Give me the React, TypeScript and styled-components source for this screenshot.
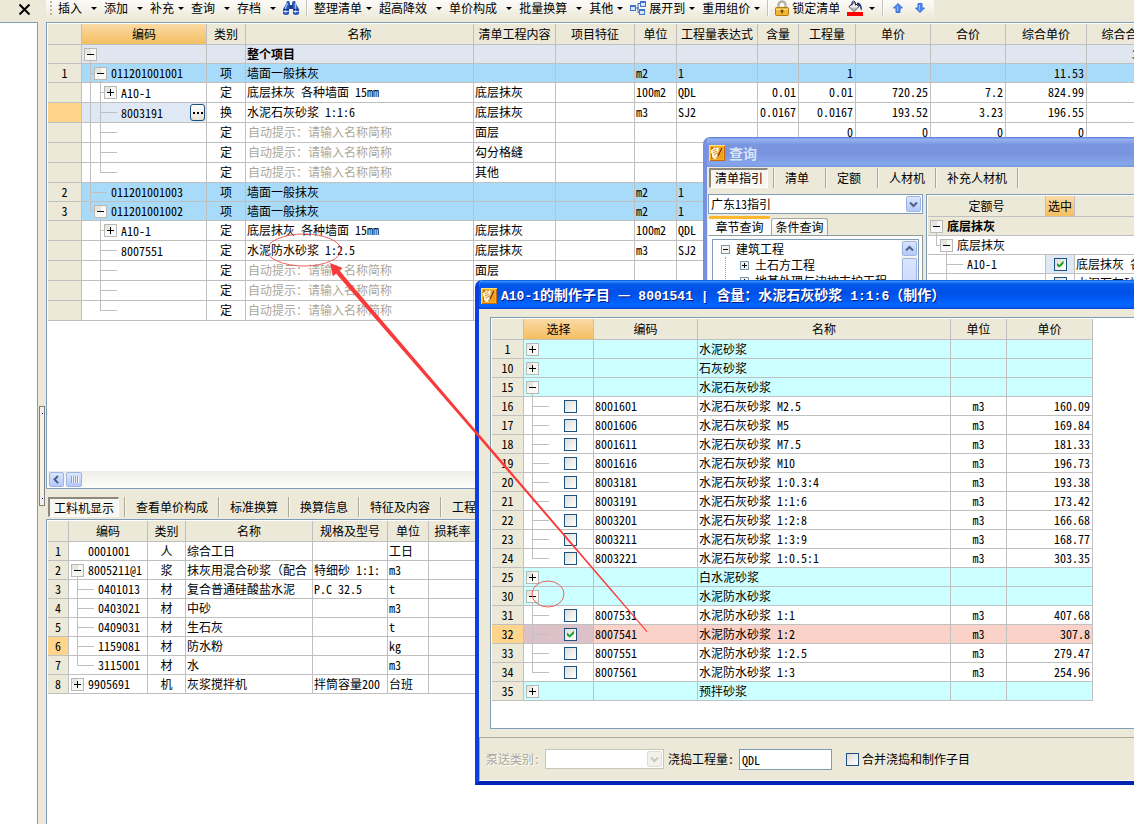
import React from 'react';
import styled, { createGlobalStyle, css } from 'styled-components';

const line = '#c0c0c0';
const beige = '#ece9d8';
const frame = '#7f9db9';

const Global = createGlobalStyle`
  * { box-sizing: border-box; }
  body { margin: 0; background: #fff; }
  body, button, input, select {
    font-family: "Noto Sans Mono CJK SC", "Noto Sans CJK SC", "Liberation Sans", sans-serif;
    font-size: 12px;
    line-height: 16px;
    color: #000;
  }
`;

const Page = styled.div`
  position: relative;
  display: flex;
  height: 100vh;
  overflow: hidden;
  background: ${beige};
`;

const SidePanel = styled.aside`
  flex: 0 0 38px;
  display: flex;
  flex-direction: column;
`;

const SideHead = styled.div`
  height: 22px;
  display: flex;
  align-items: center;
  justify-content: flex-end;
  padding: 0 8px 4px 0;
`;

const PlainButton = styled.button`
  display: flex;
  align-items: center;
  border: 0;
  padding: 0;
  background: none;
  white-space: nowrap;
`;

const SideBody = styled.div`
  flex: 1;
  background: #fff;
  border-top: 1px solid ${frame};
  border-right: 1px solid ${frame};
`;

const Splitter = styled.div`
  flex: 0 0 8px;
  padding: 406px 1px 0;
`;

const SplitHandle = styled.div`
  height: 100px;
  width: 6px;
  display: flex;
  flex-direction: column;
  justify-content: space-between;
  align-items: center;
  padding: 6px 0;
  border: 1px solid #808080;
  background: #f4f2e8;
`;

const Dot = styled.i`
  width: 1px;
  height: 1px;
  background: #0000a0;
`;

const Work = styled.main`
  flex: 1;
  min-width: 0;
  display: flex;
  flex-direction: column;
`;

const Toolbar = styled.div`
  height: 22px;
  display: flex;
  background: ${beige};
`;

const ToolGroup = styled.div`
  height: 20px;
  display: flex;
  align-items: center;
  padding: 0 0 4px 4px;
  background: linear-gradient(#fcfbf8, #ece9d8);
`;

const Grip = styled.span`
  width: 2px;
  height: 15px;
  margin-right: 6px;
  background: repeating-linear-gradient(#b8b4a4 0 2px, transparent 2px 4px);
`;

const ToolButton = styled(PlainButton)<{ $wide?: boolean }>`
  gap: ${p => (p.$wide ? 9 : 4)}px;
  padding-right: 7px;
`;

const ToolIcon = styled(PlainButton)`
  gap: 3px;
  padding-right: 7px;
`;

const MoveButton = styled(PlainButton)`
  width: 22px;
  padding-left: 3px;
`;

const Caret = styled.i`
  border: 3px solid transparent;
  border-width: 3px 3px 0;
  border-top-color: #000;
`;

const ToolSep = styled.span`
  width: 2px;
  height: 16px;
  margin-right: 6px;
  border-left: 1px solid #c5c2b8;
  border-right: 1px solid #fff;
`;

const GridPanel = styled.section<{ $fill?: boolean }>`
  flex: ${p => (p.$fill ? '1 1 0' : '0 0 305px')};
  min-height: 0;
  display: flex;
  flex-direction: column;
  justify-content: space-between;
  overflow: hidden;
  background: #fff;
  border: 1px solid ${frame};
  border-right: 0;
  border-bottom-width: ${p => (p.$fill ? 1 : 0)}px;
  padding: 1px 0 0 1px;
`;

const Table = styled.table`
  table-layout: fixed;
  width: 0;
  border-collapse: separate;
  border-spacing: 0;
`;

const cell = css`
  padding: 0 2px;
  border-right: 1px solid ${line};
  border-bottom: 1px solid ${line};
  font-weight: normal;
  white-space: nowrap;
  overflow: hidden;
`;

const Head = styled.th<{ $hot?: boolean }>`
  ${cell}
  height: 21px;
  text-align: center;
  background: ${p => (p.$hot ? 'linear-gradient(#fbdaa6, #f3bf60)' : beige)};
`;

const RowNo = styled.th<{ $hot?: boolean }>`
  ${cell}
  text-align: center;
  background: ${p => (p.$hot ? '#ffd48b' : beige)};
`;

type Align = 'left' | 'center' | 'right';

const Cell = styled.td<{ $align?: Align; $hint?: boolean; $bg?: string; $bold?: boolean }>`
  ${cell}
  text-align: ${p => p.$align || 'left'};
  padding-left: ${p => (p.$hint ? 2 : 1)}px;
  padding-right: ${p => (p.$align === 'right' ? 2 : 1)}px;
  color: ${p => (p.$hint ? '#aca899' : '#000')};
  font-weight: ${p => (p.$bold ? 700 : 400)};
  background: ${p => p.$bg || 'transparent'};
`;

const TreeTd = styled.td<{ $bg?: string }>`
  ${cell}
  padding: 0 1px 0 0;
  background: ${p => p.$bg || 'transparent'};
`;

const TreeRow = styled.div`
  display: flex;
  align-items: center;
`;

const TreeText = styled.span`
  flex: 1;
`;

const Row = styled.tr<{ $h?: number; $bg?: string }>`
  height: ${p => p.$h || 19}px;
  background: ${p => p.$bg || '#fff'};
  ${Cell} {
    padding-bottom: ${p => (p.$h === 20 ? 2 : 0)}px;
  }
`;

const MoreButton = styled.button`
  width: 15px;
  height: 17px;
  display: flex;
  align-items: center;
  justify-content: center;
  gap: 2px;
  padding: 0;
  border: 1px solid #1c4f7c;
  border-radius: 3px;
  background: linear-gradient(#fff, #e6e3d6);
`;

const MoreDot = styled.i`
  width: 2px;
  height: 2px;
  background: #000;
`;

const Check = styled.input.attrs({ type: 'checkbox' })`
  appearance: none;
  flex: none;
  display: block;
  width: 13px;
  height: 13px;
  margin: 0;
  border: 1px solid #1c5180;
  background: linear-gradient(135deg, #dcdcd7, #fff);
  &:checked::after {
    content: '';
    display: block;
    width: 7px;
    height: 7px;
    margin: 2px;
    background: #21a121;
    clip-path: polygon(0 29%, 40% 66%, 100% 0, 100% 45%, 40% 100%, 0 70%);
  }
`;

const SelectBox = styled.div`
  display: flex;
  padding-left: 11px;
`;

const CenterBox = styled.div`
  display: flex;
  justify-content: center;
`;

/* Tree guides drawn in front of a node: depth decides the indent. */
type NodeInfo = { d: number; box?: '+' | '-'; last?: boolean; through?: number[] };

const tx = (d: number) => 8 + 10 * d;

const GuideSvg = styled.svg`
  display: block;
  flex: none;
`;

function Guides({ node, h = 18 }: { node: NodeInfo; h?: number }) {
  const { d, box, last, through = [] } = node;
  const x = tx(d);
  const px = tx(d - 1);
  const mid = Math.floor(h / 2);
  return (
    <GuideSvg width={x + 11} height={h} shapeRendering="crispEdges" aria-hidden="true">
      {through.map(t => (
        <rect key={t} x={tx(t)} y={0} width={1} height={h} fill={line} />
      ))}
      {d > 0 && <rect x={px} y={0} width={1} height={last ? mid + 1 : h} fill={line} />}
      {d > 0 && <rect x={px} y={mid} width={box ? 5 : 17} height={1} fill={line} />}
      {box === '-' && <rect x={x} y={mid} width={1} height={h - mid} fill={line} />}
      {box && (
        <g>
          <rect x={x - 6} y={mid - 6} width={13} height={13} fill="#b8b8b4" />
          <rect x={x - 5} y={mid - 5} width={11} height={11} fill="#f8f8f6" />
          <rect x={x - 5} y={mid - 5} width={6} height={5} fill="#e6e6e1" />
          <rect x={x - 3} y={mid} width={7} height={1} fill="#000" />
          {box === '+' && <rect x={x} y={mid - 3} width={1} height={7} fill="#000" />}
        </g>
      )}
    </GuideSvg>
  );
}

function Cols({ widths }: { widths: number[] }) {
  return (
    <colgroup>
      {widths.map((w, i) => (
        <col key={i} style={{ width: w }} />
      ))}
    </colgroup>
  );
}

/* ---------- Main bill grid ---------- */

const mainHeads = ['', '编码', '类别', '名称', '清单工程内容', '项目特征', '单位', '工程量表达式', '含量', '工程量', '单价', '合价', '综合单价', '综合合价'];
const mainWidths = [34, 125, 39, 228, 82, 79, 42, 81, 41, 57, 75, 75, 81, 78];

type MainRow = {
  no?: string;
  node: NodeInfo;
  code?: string;
  kind?: string;
  name?: string;
  work?: string;
  unit?: string;
  expr?: string;
  nums?: string[];
  tone?: 'root' | 'bill' | 'current';
};

const hint = '自动提示：请输入名称简称';
const zeros = ['', '0', '0', '0', '0', ''];

const mainRows: MainRow[] = [
  { node: { d: 0, box: '-' }, name: '整个项目', nums: ['', '', '', '', '', '34.59'], tone: 'root' },
  { no: '1', node: { d: 1, box: '-' }, code: '011201001001', kind: '项', name: '墙面一般抹灰', unit: 'm2', expr: '1', nums: ['', '1', '', '', '11.53', ''], tone: 'bill' },
  { node: { d: 2, box: '+', through: [0] }, code: 'A10-1', kind: '定', name: '底层抹灰 各种墙面 15mm', work: '底层抹灰', unit: '100m2', expr: 'QDL', nums: ['0.01', '0.01', '720.25', '7.2', '824.99', ''] },
  { node: { d: 2, through: [0] }, code: '8003191', kind: '换', name: '水泥石灰砂浆 1:1:6', work: '底层抹灰', unit: 'm3', expr: 'SJ2', nums: ['0.0167', '0.0167', '193.52', '3.23', '196.55', ''], tone: 'current' },
  { node: { d: 2, through: [0] }, kind: '定', work: '面层', nums: zeros },
  { node: { d: 2, through: [0] }, kind: '定', work: '勾分格缝' },
  { node: { d: 2, last: true, through: [0] }, kind: '定', work: '其他' },
  { no: '2', node: { d: 1 }, code: '011201001003', kind: '项', name: '墙面一般抹灰', unit: 'm2', expr: '1', tone: 'bill' },
  { no: '3', node: { d: 1, box: '-', last: true }, code: '011201001002', kind: '项', name: '墙面一般抹灰', unit: 'm2', expr: '1', tone: 'bill' },
  { node: { d: 2, box: '+' }, code: 'A10-1', kind: '定', name: '底层抹灰 各种墙面 15mm', work: '底层抹灰', unit: '100m2', expr: 'QDL' },
  { node: { d: 2 }, code: '8007551', kind: '定', name: '水泥防水砂浆 1:2.5', work: '底层抹灰', unit: 'm3', expr: 'SJ2' },
  { node: { d: 2 }, kind: '定', work: '面层' },
  { node: { d: 2 }, kind: '定' },
  { node: { d: 2, last: true }, kind: '定' },
];

function MainGrid() {
  return (
    <Table>
      <Cols widths={mainWidths} />
      <thead>
        <tr>
          {mainHeads.map((h, i) => (
            <Head key={i} $hot={i === 1}>{h}</Head>
          ))}
        </tr>
      </thead>
      <tbody>
        {mainRows.map((r, i) => {
          const flat = r.tone === 'root' || r.tone === 'bill';
          const h = flat ? 19 : 20;
          const bg = r.tone === 'root' ? '#dfe6f0' : r.tone === 'bill' ? '#a8dbfa' : '#fff';
          const nums = r.nums || ['', '', '', '', '', ''];
          return (
            <Row key={i} $h={h} $bg={bg}>
              <RowNo $hot={r.tone === 'current'}>{r.no}</RowNo>
              <TreeTd $bg={r.tone === 'current' ? '#dfe9f5' : undefined}>
                <TreeRow>
                  <Guides node={r.node} h={h - 1} />
                  <TreeText>{r.code}</TreeText>
                  {r.tone === 'current' && (
                    <MoreButton aria-label="选择编码">
                      <MoreDot /><MoreDot /><MoreDot />
                    </MoreButton>
                  )}
                </TreeRow>
              </TreeTd>
              <Cell $align="center">{r.kind}</Cell>
              <Cell $hint={!r.name} $bold={r.tone === 'root'}>{r.name || hint}</Cell>
              <Cell>{r.work}</Cell>
              <Cell />
              <Cell>{r.unit}</Cell>
              <Cell>{r.expr}</Cell>
              {nums.map((n, k) => (
                <Cell key={k} $align="right">{n}</Cell>
              ))}
            </Row>
          );
        })}
      </tbody>
    </Table>
  );
}

/* ---------- Resource grid ---------- */

const resHeads = ['', '编码', '类别', '名称', '规格及型号', '单位', '损耗率', ''];
const resWidths = [21, 79, 38, 127, 75, 41, 48, 80];

type ResRow = [string, NodeInfo, string, string, string, string, string];

const resRows: ResRow[] = [
  ['1', { d: 0 }, '0001001', '人', '综合工日', '', '工日'],
  ['2', { d: 0, box: '-' }, '8005211@1', '浆', '抹灰用混合砂浆（配合', '特细砂 1:1:', 'm3'],
  ['3', { d: 1 }, '0401013', '材', '复合普通硅酸盐水泥', 'P.C 32.5', 't'],
  ['4', { d: 1 }, '0403021', '材', '中砂', '', 'm3'],
  ['5', { d: 1 }, '0409031', '材', '生石灰', '', 't'],
  ['6', { d: 1 }, '1159081', '材', '防水粉', '', 'kg'],
  ['7', { d: 1, last: true }, '3115001', '材', '水', '', 'm3'],
  ['8', { d: 0, box: '+' }, '9905691', '机', '灰浆搅拌机', '拌筒容量200', '台班'],
];

function ResourceGrid() {
  return (
    <Table>
      <Cols widths={resWidths} />
      <thead>
        <tr>{resHeads.map((h, i) => <Head key={i}>{h}</Head>)}</tr>
      </thead>
      <tbody>
        {resRows.map(([no, node, code, kind, name, spec, unit]) => (
          <Row key={no}>
            <RowNo $hot={no === '6'}>{no}</RowNo>
            <TreeTd>
              <TreeRow><Guides node={node} /><TreeText>{code}</TreeText></TreeRow>
            </TreeTd>
            <Cell $align="center">{kind}</Cell>
            <Cell>{name}</Cell>
            <Cell>{spec}</Cell>
            <Cell>{unit}</Cell>
            <Cell />
            <Cell />
          </Row>
        ))}
      </tbody>
    </Table>
  );
}

/* ---------- Scroll bar, tabs ---------- */

const HScroll = styled.div`
  flex: 0 0 17px;
  display: flex;
  align-items: center;
  gap: 2px;
  padding-left: 1px;
  background: linear-gradient(#eeede5, #fefefb);
`;

const scrollFace = css`
  display: flex;
  align-items: center;
  justify-content: center;
  padding: 0;
  border: 1px solid #9db5e4;
  border-radius: 2px;
  background: linear-gradient(#dbe6fe, #b3c9fa);
`;

const ScrollButton = styled.button`
  ${scrollFace}
  flex: none;
  width: 15px;
  height: 15px;
`;

const Thumb = styled.span`
  ${scrollFace}
  width: 16px;
  height: 15px;
  gap: 1px;
`;

const Ridge = styled.i`
  width: 1px;
  height: 7px;
  background: #7f9fe8;
  box-shadow: 1px 0 #eef4fe;
`;

const TabStrip = styled.div<{ $low?: boolean }>`
  flex: none;
  display: flex;
  align-items: center;
  height: ${p => (p.$low ? 30 : 21)}px;
  padding: ${p => (p.$low ? '6px 0 0 2px' : '0 0 0 2px')};
  overflow: hidden;
`;

const Tab = styled.button<{ $on?: boolean }>`
  flex: none;
  height: 21px;
  min-width: 50px;
  padding: 0 10px;
  text-align: left;
  white-space: nowrap;
  border: 0;
  background: none;
  ${p =>
    p.$on &&
    css`
      height: 20px;
      padding: 0 4px;
      margin-right: 5px;
      border: 1px solid #fff;
      border-top: 2px solid #8c897c;
      border-left: 2px solid #8c897c;
      background: #f8f6f0;
    `}
`;

const TabRule = styled.i`
  flex: none;
  width: 2px;
  height: 20px;
  border-left: 1px solid #aca899;
  border-right: 1px solid #f8f7f2;
`;

function Tabs({ items, low }: { items: string[]; low?: boolean }) {
  return (
    <TabStrip $low={low} role="tablist">
      {items.map((t, i) => (
        <React.Fragment key={t}>
          <Tab $on={i === 0} role="tab" aria-selected={i === 0}>{t}</Tab>
          <TabRule />
        </React.Fragment>
      ))}
    </TabStrip>
  );
}

/* ---------- Icons ---------- */

const AppIcon = () => (
  <svg width="16" height="16" viewBox="0 0 16 16" aria-hidden="true">
    <rect width="16" height="16" fill="#f6b21e" />
    <path d="M0 0h16v1H1v15H0z" fill="#ffe27a" />
    <path d="M15 1h1v15H1v-1h14z" fill="#c86a08" />
    <rect x="2" y="2" width="12" height="12" fill="#c8700e" />
    <path d="M9 2h5v12H8z" fill="#f0a01a" />
    <path d="M2 5l2-1 1-2 2 1 2-1 1 2-1 1 1 1-2 2 1 2-2 3 1 1H5l-2-2V9L2 8z" fill="#fff6d8" />
    <path d="M4 6l3-2M4 8l4-2M5 10l3-2" stroke="#c86a08" strokeWidth="0.8" />
    <path d="M14 2l-4 6-1 3 2-2 3-5z" fill="#ffcb45" />
    <path d="M13 3l-4 8" stroke="#7c2d05" strokeWidth="1.2" />
  </svg>
);

const Binoculars = () => (
  <svg width="16" height="16" viewBox="0 0 16 16" aria-hidden="true">
    <path d="M4 1h2l1 2v4l-1 2v5q-3 2-6 0V9l3-5z" fill="#2c56b8" />
    <path d="M12 1h-2L9 3v4l1 2v5q3 2 6 0V9l-3-5z" fill="#2c56b8" />
    <rect x="6" y="5" width="4" height="4" fill="#1c3c8c" />
    <path d="M4.500 3l-2 5v5M12.500 3l0 5v5" stroke="#9cc0f4" strokeWidth="1.400" fill="none" />
    <path d="M0.500 11.500h5M10.500 11.500h5" stroke="#c8dcfa" />
    <path d="M1 9.500h5M10 9.500h5" stroke="#16357e" />
  </svg>
);

const OrgIcon = () => (
  <svg width="19" height="16" viewBox="0 0 19 16" aria-hidden="true">
    <path d="M5 8h4M8 3.500v9M8 3.500h3M8 12.500h3" stroke="#3a62b8" fill="none" />
    <g fill="#d8e8fc" stroke="#3f73cf">
      <rect x="0.500" y="5.500" width="5" height="5" />
      <rect x="10.500" y="1.500" width="5" height="5" />
      <rect x="9.500" y="9.500" width="5" height="5" />
    </g>
    <path d="M0 6h6M10 2h6M9 10h6" stroke="#3f73cf" strokeWidth="2" />
  </svg>
);

const LockIcon = () => (
  <svg width="14" height="16" viewBox="0 0 14 16" aria-hidden="true">
    <path d="M3.500 8V5a3.500 3.500 0 0 1 7 0v3" fill="none" stroke="#8a8a86" strokeWidth="2" />
    <path d="M3.500 8V5a3.500 3.500 0 0 1 7 0v3" fill="none" stroke="#d8d8d2" strokeWidth="0.800" />
    <rect x="0.500" y="7.500" width="13" height="8" rx="1" fill="#f2b632" stroke="#b47a14" />
    <path d="M1 9.500h12" stroke="#fce08c" />
    <path d="M7 9.500v4M5.500 11h3" stroke="#6e4806" strokeWidth="1.400" />
  </svg>
);

const FillIcon = () => (
  <svg width="18" height="16" viewBox="0 0 18 16" aria-hidden="true">
    <path d="M2 6.500L7 2.500l5 4-5 5z" fill="#f4f4f4" stroke="#222" />
    <path d="M3 7.500h8l-4 3.500z" fill="#b8b8b8" />
    <path d="M5 5.500V2Q7-0.500 8.500 2.500v3" fill="none" stroke="#1a2a7a" />
    <path d="M10 2.500q5 0 5 8-2-1-2-4l-3-2z" fill="#16307e" />
    <rect x="0" y="12" width="16" height="4" fill="#f00" />
  </svg>
);

const ArrowIcon = ({ down }: { down?: boolean }) => (
  <svg width="10" height="10" viewBox="0 0 10 10" aria-hidden="true">
    <path
      d={down ? 'M5 9.500L0.500 5H3V0.500H7V5H9.500z' : 'M5 0.500L0.500 5H3V9.500H7V5H9.500z'}
      fill="#4a86ee"
      stroke="#3f70d8"
    />
    <path d={down ? 'M4.500 2v5' : 'M4.500 3v5'} stroke="#9cc4fc" />
  </svg>
);

const Chevron = ({ dir, color = '#4d6185' }: { dir: 'left' | 'up' | 'down'; color?: string }) => {
  const d = { left: 'M6 1L2.500 4.500L6 8', up: 'M1 6.500L4.500 3L8 6.500', down: 'M1 2.500L4.500 6L8 2.500' }[dir];
  return (
    <svg width="9" height="9" viewBox="0 0 9 9" aria-hidden="true">
      <path d={d} fill="none" stroke={color} strokeWidth="2" />
    </svg>
  );
};

const SmallBox = ({ plus }: { plus?: boolean }) => (
  <svg width="9" height="9" viewBox="0 0 9 9" shapeRendering="crispEdges" aria-hidden="true">
    <rect width="9" height="9" fill="#7898b5" />
    <rect x="1" y="1" width="7" height="7" fill="#f4f3ee" />
    <rect x="2" y="4" width="5" height="1" fill="#000" />
    {plus && <rect x="4" y="2" width="1" height="5" fill="#000" />}
  </svg>
);

/* ---------- Windows ---------- */

const Window = styled.section<{ $x: number; $y: number; $h: number; $active?: boolean }>`
  position: absolute;
  left: ${p => p.$x}px;
  top: ${p => p.$y}px;
  right: 0;
  height: ${p => p.$h}px;
  display: flex;
  flex-direction: column;
  overflow: hidden;
  border-radius: 7px 0 0 0;
  border: solid ${p => (p.$active ? '#0a3fe0' : '#7890e0')};
  border-width: 0 0 4px 4px;
  border-bottom-color: ${p => (p.$active ? '#0023b4' : '#7890e0')};
  background: ${beige};
`;

const TitleBar = styled.header<{ $active?: boolean }>`
  flex: none;
  height: ${p => (p.$active ? 29 : 30)}px;
  margin-left: -4px;
  padding: 2px 0 0 6px;
  display: flex;
  align-items: center;
  gap: 4px;
  background: ${p =>
    p.$active
      ? 'linear-gradient(#0a4fe0, #2f8cfb 5%, #0558ea 14%, #0050e8 45%, #0066ff 85%, #0062fa 92%, #0040d0)'
      : 'linear-gradient(#5d7ad8, #96b2f0 8%, #7b96e0 25%, #7a94df 55%, #84a6ea 90%, #7896e0)'};
`;

const Title = styled.h1<{ $active?: boolean }>`
  margin: 0;
  font-size: 14px;
  line-height: 20px;
  font-weight: 700;
  white-space: pre;
  color: ${p => (p.$active ? '#fff' : '#d8e4f8')};
  text-shadow: ${p => (p.$active ? '1px 1px #0a1883' : 'none')};
`;

const Latin = styled.span`
  font-family: "Liberation Mono", monospace;
  font-size: 13px;
`;

const QueryBody = styled.div`
  flex: 1;
  min-height: 0;
  display: flex;
  gap: 3px;
  padding: 6px 0 0 1px;
`;

const QueryLeft = styled.div`
  flex: 0 0 215px;
  display: flex;
  flex-direction: column;
`;

const Combo = styled.div<{ $w?: number; $off?: boolean }>`
  flex: none;
  position: relative;
  display: flex;
  width: ${p => (p.$w ? p.$w + 'px' : 'auto')};
  height: 20px;
  border: 1px solid ${p => (p.$off ? '#c9c7ba' : frame)};
  background: #fff;
`;

const Select = styled.select`
  appearance: none;
  flex: 1;
  width: 100%;
  border: 0;
  padding: 0 20px 0 2px;
  background: none;
  opacity: 1;
`;

const ComboFace = styled.span<{ $off?: boolean }>`
  ${scrollFace}
  position: absolute;
  right: 1px;
  top: 1px;
  width: 15px;
  height: 16px;
  pointer-events: none;
  ${p => p.$off && css`border-color: #e0ded2; background: #f2f1ea;`}
`;

const PageTabs = styled.div`
  display: flex;
  align-items: flex-end;
  height: 19px;
  margin-top: 2px;
`;

const PageTab = styled.button<{ $on?: boolean }>`
  height: ${p => (p.$on ? 19 : 17)}px;
  width: ${p => (p.$on ? 63 : 57)}px;
  padding: 0;
  line-height: 14px;
  text-align: center;
  white-space: nowrap;
  border: 1px solid #a3a79c;
  border-bottom: 0;
  border-radius: 3px 3px 0 0;
  background: linear-gradient(#fff, #f1f0e8);
  ${p => p.$on && css`border-color: #e5972d #fcfcfe; border-top: 3px solid #ffb82e; background: #fcfcfe;`}
`;

const TabPage = styled.div`
  flex: 1;
  min-height: 0;
  display: flex;
  padding: 3px;
  border: 1px solid #919b9c;
  border-left-color: #fcfcfe;
  background: #fcfcfe;
`;

const TreeBox = styled.div`
  flex: 1;
  display: flex;
  border: 1px solid ${frame};
  background: #fff;
  overflow: hidden;
`;

const TreeList = styled.ul`
  flex: 1;
  min-width: 0;
  margin: 0;
  padding: 1px 0 0 8px;
  list-style: none;
  overflow: hidden;
`;

const TreeItem = styled.li`
  display: flex;
  align-items: center;
  gap: 6px;
  height: 16px;
  white-space: nowrap;
`;

const SubTree = styled.ul`
  margin: 0 0 0 4px;
  padding: 0 0 0 14px;
  border-left: 1px dotted #a0a0a0;
  list-style: none;
`;

const VScroll = styled.div`
  flex: 0 0 17px;
  display: flex;
  flex-direction: column;
  align-items: center;
  gap: 2px;
  padding-top: 1px;
  background: #f6f5ef;
`;

const VThumb = styled.span`
  ${scrollFace}
  width: 15px;
  height: 60px;
`;

const QueryRight = styled.div`
  flex: 1;
  min-width: 0;
  overflow: hidden;
  border: 1px solid ${frame};
  border-right: 0;
  padding: 1px 0 0 1px;
  background: #fff;
`;

const SpanCell = styled.td<{ $bold?: boolean }>`
  padding: 0;
  border-bottom: 1px solid ${line};
  white-space: nowrap;
  font-weight: ${p => (p.$bold ? 700 : 400)};
`;

function QueryWindow() {
  return (
    <Window $x={703} $y={137} $h={300}>
      <TitleBar>
        <AppIcon />
        <Title>查询</Title>
      </TitleBar>
      <Tabs items={['清单指引', '清单', '定额', '人材机', '补充人材机']} />
      <QueryBody>
        <QueryLeft>
          <Combo>
            <Select aria-label="指引库" defaultValue="gd13"><option value="gd13">广东13指引</option></Select>
            <ComboFace><Chevron dir="down" /></ComboFace>
          </Combo>
          <PageTabs role="tablist">
            <PageTab $on role="tab" aria-selected>章节查询</PageTab>
            <PageTab role="tab" aria-selected={false}>条件查询</PageTab>
          </PageTabs>
          <TabPage>
            <TreeBox>
              <TreeList>
                <TreeItem><SmallBox />建筑工程</TreeItem>
                <li>
                  <SubTree>
                    <TreeItem><SmallBox plus />土石方工程</TreeItem>
                    <TreeItem><SmallBox plus />地基处理与边坡支护工程</TreeItem>
                  </SubTree>
                </li>
              </TreeList>
              <VScroll>
                <ScrollButton aria-label="向上滚动"><Chevron dir="up" /></ScrollButton>
                <VThumb />
              </VScroll>
            </TreeBox>
          </TabPage>
        </QueryLeft>
        <QueryRight>
          <Table>
            <Cols widths={[118, 29, 200]} />
            <thead>
              <tr><Head>定额号</Head><Head $hot>选中</Head><Head /></tr>
            </thead>
            <tbody>
              <Row $bg={beige}>
                <SpanCell colSpan={3} $bold><TreeRow><Guides node={{ d: 0, box: '-' }} />底层抹灰</TreeRow></SpanCell>
              </Row>
              <Row>
                <SpanCell colSpan={3}><TreeRow><Guides node={{ d: 1, box: '-', last: true }} />底层抹灰</TreeRow></SpanCell>
              </Row>
              <Row>
                <TreeTd><TreeRow><Guides node={{ d: 2 }} /><TreeText>A10-1</TreeText></TreeRow></TreeTd>
                <Cell $bg="#dfe9f5"><CenterBox><Check defaultChecked aria-label="选中 A10-1" /></CenterBox></Cell>
                <Cell>底层抹灰 各种墙面 15mm</Cell>
              </Row>
              <Row>
                <TreeTd><TreeRow><Guides node={{ d: 2 }} /><TreeText /></TreeRow></TreeTd>
                <Cell><CenterBox><Check aria-label="选中 水泥石灰砂浆" /></CenterBox></Cell>
                <Cell>水泥石灰砂浆</Cell>
              </Row>
            </tbody>
          </Table>
        </QueryRight>
      </QueryBody>
    </Window>
  );
}

const mixHeads = ['', '选择', '编码', '名称', '单位', '单价'];
const mixWidths = [32, 70, 104, 253, 56, 86];

type MixRow = { no: string; name: string; box?: '+' | '-'; code?: string; price?: string; last?: boolean; on?: boolean };

const mixRows: MixRow[] = [
  { no: '1', box: '+', name: '水泥砂浆' },
  { no: '10', box: '+', name: '石灰砂浆' },
  { no: '15', box: '-', name: '水泥石灰砂浆' },
  { no: '16', code: '8001601', name: '水泥石灰砂浆 M2.5', price: '160.09' },
  { no: '17', code: '8001606', name: '水泥石灰砂浆 M5', price: '169.84' },
  { no: '18', code: '8001611', name: '水泥石灰砂浆 M7.5', price: '181.33' },
  { no: '19', code: '8001616', name: '水泥石灰砂浆 M10', price: '196.73' },
  { no: '20', code: '8003181', name: '水泥石灰砂浆 1:0.3:4', price: '193.38' },
  { no: '21', code: '8003191', name: '水泥石灰砂浆 1:1:6', price: '173.42' },
  { no: '22', code: '8003201', name: '水泥石灰砂浆 1:2:8', price: '166.68' },
  { no: '23', code: '8003211', name: '水泥石灰砂浆 1:3:9', price: '168.77' },
  { no: '24', code: '8003221', name: '水泥石灰砂浆 1:0.5:1', price: '303.35', last: true },
  { no: '25', box: '+', name: '白水泥砂浆' },
  { no: '30', box: '-', name: '水泥防水砂浆' },
  { no: '31', code: '8007531', name: '水泥防水砂浆 1:1', price: '407.68' },
  { no: '32', code: '8007541', name: '水泥防水砂浆 1:2', price: '307.8', on: true },
  { no: '33', code: '8007551', name: '水泥防水砂浆 1:2.5', price: '279.47' },
  { no: '34', code: '8007561', name: '水泥防水砂浆 1:3', price: '254.96', last: true },
  { no: '35', box: '+', name: '预拌砂浆' },
];

const MixPanel = styled.div`
  flex: 1;
  min-height: 0;
  margin: 8px 0 8px 11px;
  padding: 1px 0 0 1px;
  overflow: hidden;
  border: 1px solid ${frame};
  border-right: 0;
  background: #fff;
`;

const Footer = styled.footer`
  flex: 0 0 44px;
  display: flex;
  align-items: center;
  padding-left: 6px;
  border: solid #aca899;
  border-width: 1px 0 0 1px;
  border-bottom: 1px solid #fff;
  white-space: nowrap;
`;

const FieldLabel = styled.label<{ $off?: boolean }>`
  width: ${p => (p.$off ? 59 : 71)}px;
  color: ${p => (p.$off ? '#aca899' : '#000')};
  text-shadow: ${p => (p.$off ? '1px 1px #fff' : 'none')};
`;

const TextBox = styled.input`
  width: 93px;
  height: 21px;
  margin-right: 14px;
  padding: 0 2px;
  line-height: 18px;
  border: 1px solid ${frame};
  background: #fff;
`;

const CheckLabel = styled.label`
  display: flex;
  align-items: center;
  gap: 3px;
`;

const ComboWrap = styled.div`
  margin-right: 4px;
`;

function MixWindow() {
  return (
    <Window $x={475} $y={280} $h={505} $active>
      <TitleBar $active>
        <AppIcon />
        <Title $active>
          <Latin>A10-1</Latin>的制作子目<Latin> </Latin>—<Latin> 8001541 | </Latin>含量：水泥石灰砂浆<Latin> 1:1:6</Latin>（制作）
        </Title>
      </TitleBar>
      <MixPanel>
        <Table>
          <Cols widths={mixWidths} />
          <thead>
            <tr>{mixHeads.map((h, i) => <Head key={i} $hot={i === 1}>{h}</Head>)}</tr>
          </thead>
          <tbody>
            {mixRows.map(r => (
              <Row key={r.no} $bg={r.box ? '#ccffff' : r.on ? '#fad2c8' : '#fff'}>
                <RowNo $hot={r.on}>{r.no}</RowNo>
                <TreeTd $bg={r.on ? '#dcc2c8' : undefined}>
                  <TreeRow>
                    <Guides node={{ d: r.box ? 0 : 1, box: r.box, last: r.last }} />
                    {!r.box && (
                      <SelectBox><Check defaultChecked={r.on} aria-label={`选择 ${r.code}`} /></SelectBox>
                    )}
                  </TreeRow>
                </TreeTd>
                <Cell>{r.code}</Cell>
                <Cell>{r.name}</Cell>
                <Cell $align="center">{r.box ? '' : 'm3'}</Cell>
                <Cell $align="right">{r.price}</Cell>
              </Row>
            ))}
          </tbody>
        </Table>
      </MixPanel>
      <Footer>
        <FieldLabel $off htmlFor="pump">泵送类别:</FieldLabel>
        <ComboWrap>
          <Combo $off $w={119}>
            <Select id="pump" disabled />
            <ComboFace $off><Chevron dir="down" color="#c9c7ba" /></ComboFace>
          </Combo>
        </ComboWrap>
        <FieldLabel htmlFor="qty">浇捣工程量:</FieldLabel>
        <TextBox id="qty" type="text" defaultValue="QDL" />
        <CheckLabel><Check />合并浇捣和制作子目</CheckLabel>
      </Footer>
    </Window>
  );
}

const Marks = styled.svg`
  position: absolute;
  left: 0;
  top: 0;
  pointer-events: none;
`;

export default function App() {
  return (
    <>
      <Global />
      <Page>
        <SidePanel>
          <SideHead>
            <PlainButton aria-label="关闭">
              <svg width="11" height="11" viewBox="0 0 11 11"><path d="M0.500 0.500l10 10M10.500 0.500l-10 10" stroke="#000" strokeWidth="2" /></svg>
            </PlainButton>
          </SideHead>
          <SideBody />
        </SidePanel>
        <Splitter>
          <SplitHandle><Dot /><Dot /></SplitHandle>
        </Splitter>
        <Work>
          <Toolbar role="toolbar">
            <ToolGroup>
              <Grip />
              <ToolButton $wide>插入<Caret /></ToolButton>
              <ToolButton $wide>添加<Caret /></ToolButton>
              <ToolButton>补充<Caret /></ToolButton>
              <ToolButton $wide>查询<Caret /></ToolButton>
              <ToolButton $wide>存档<Caret /></ToolButton>
              <ToolIcon aria-label="查找"><Binoculars /></ToolIcon>
              <ToolSep />
              <ToolButton>整理清单<Caret /></ToolButton>
              <ToolButton $wide>超高降效<Caret /></ToolButton>
              <ToolButton $wide>单价构成<Caret /></ToolButton>
              <ToolButton $wide>批量换算<Caret /></ToolButton>
              <ToolButton>其他<Caret /></ToolButton>
              <OrgIcon />
              <ToolButton>展开到<Caret /></ToolButton>
              <ToolButton>重用组价<Caret /></ToolButton>
              <ToolSep />
              <ToolIcon><LockIcon />锁定清单</ToolIcon>
              <ToolButton aria-label="填充颜色"><FillIcon /><Caret /></ToolButton>
              <ToolSep />
              <MoveButton aria-label="上移"><ArrowIcon /></MoveButton>
              <MoveButton aria-label="下移"><ArrowIcon down /></MoveButton>
            </ToolGroup>
          </Toolbar>
          <GridPanel $fill>
            <MainGrid />
            <HScroll>
              <ScrollButton aria-label="向左滚动"><Chevron dir="left" /></ScrollButton>
              <Thumb><Ridge /><Ridge /><Ridge /><Ridge /></Thumb>
            </HScroll>
          </GridPanel>
          <Tabs low items={['工料机显示', '查看单价构成', '标准换算', '换算信息', '特征及内容', '工程']} />
          <GridPanel>
            <ResourceGrid />
          </GridPanel>
        </Work>
        <QueryWindow />
        <MixWindow />
        <Marks width="700" height="660" viewBox="0 0 700 660" aria-hidden="true">
          <ellipse cx="304" cy="250" rx="37" ry="16" fill="none" stroke="#f0605a" />
          <ellipse cx="548" cy="594" rx="16" ry="13" fill="none" stroke="#f0605a" />
          <path
            d="M330 263L342.700 267.900L339.500 270.700L476 430.500L647.400 631.300L646.600 631.900L474 432.300L336 273.600L332.900 276.300z"
            fill="#f93a3a"
          />
        </Marks>
      </Page>
    </>
  );
}
